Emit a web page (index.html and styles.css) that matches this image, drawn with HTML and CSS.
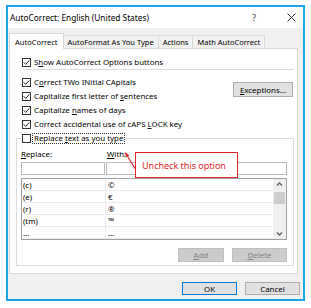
FILE: index.html
```html
<!DOCTYPE html>
<html>
<head>
<meta charset="utf-8">
<link rel="stylesheet" href="styles.css">
</head>
<body>
<div class="win">
  <div class="titlebar">
    <span class="title">AutoCorrect: English (United States)</span>
    <span class="help">?</span>
    <span class="close"><svg width="9" height="9" viewBox="0 0 9 9"><path d="M0.5 0.5 L8.5 8.5 M8.5 0.5 L0.5 8.5" stroke="#333" stroke-width="1" fill="none"/></svg></span>
  </div>
  <div class="body">
    <div class="tabs">
      <div class="tab active">AutoCorrect</div>
      <div class="tab">AutoFormat As You Type</div>
      <div class="tab">Actions</div>
      <div class="tab">Math AutoCorrect</div>
    </div>
    <div class="panel">
      <div class="row show">
        <svg class="cb" width="9" height="9" viewBox="0 0 9 9"><rect x="0.5" y="0.5" width="8" height="8" fill="#fff" stroke="#333"/><path d="M1.8 4.4 L3.7 6.4 L7.3 2.4" stroke="#222" stroke-width="1" fill="none"/></svg>
        <span>S<u>h</u>ow AutoCorrect Options buttons</span>
      </div>
      <div class="sep"></div>
      <div class="opts">
        <div class="optlist">
          <div class="row">
            <svg class="cb" width="9" height="9" viewBox="0 0 9 9"><rect x="0.5" y="0.5" width="8" height="8" fill="#fff" stroke="#333"/><path d="M1.8 4.4 L3.7 6.4 L7.3 2.4" stroke="#222" stroke-width="1" fill="none"/></svg>
            <span>C<u>o</u>rrect TWo INitial CApitals</span>
          </div>
          <div class="row">
            <svg class="cb" width="9" height="9" viewBox="0 0 9 9"><rect x="0.5" y="0.5" width="8" height="8" fill="#fff" stroke="#333"/><path d="M1.8 4.4 L3.7 6.4 L7.3 2.4" stroke="#222" stroke-width="1" fill="none"/></svg>
            <span>Capitalize first letter of <u>s</u>entences</span>
          </div>
          <div class="row">
            <svg class="cb" width="9" height="9" viewBox="0 0 9 9"><rect x="0.5" y="0.5" width="8" height="8" fill="#fff" stroke="#333"/><path d="M1.8 4.4 L3.7 6.4 L7.3 2.4" stroke="#222" stroke-width="1" fill="none"/></svg>
            <span>Capitalize <u>n</u>ames of days</span>
          </div>
          <div class="row">
            <svg class="cb" width="9" height="9" viewBox="0 0 9 9"><rect x="0.5" y="0.5" width="8" height="8" fill="#fff" stroke="#333"/><path d="M1.8 4.4 L3.7 6.4 L7.3 2.4" stroke="#222" stroke-width="1" fill="none"/></svg>
            <span>Correct accidental use of cAPS <u>L</u>OCK key</span>
          </div>
        </div>
        <div class="btn exc"><u>E</u>xceptions...</div>
      </div>
      <fieldset class="group">
        <legend class="legend">
          <svg class="cb" width="9" height="9" viewBox="0 0 9 9"><rect x="0.5" y="0.5" width="8" height="8" fill="#fff" stroke="#333"/></svg>
          <span class="focus">Replace <u>t</u>ext as you type</span>
        </legend>
        <div class="cols labels">
          <span><u>R</u>eplace:</span>
          <span class="withlbl"><u>W</u>ith:</span>
        </div>
        <div class="cols inputs">
          <div class="input"></div>
          <div class="input"></div>
        </div>
        <div class="list">
          <div class="table">
            <div class="lrow"><span class="c1">(c)</span><span class="c2">©</span></div>
            <div class="lrow"><span class="c1">(e)</span><span class="c2">€</span></div>
            <div class="lrow"><span class="c1">(r)</span><span class="c2">®</span></div>
            <div class="lrow"><span class="c1">(tm)</span><span class="c2">™</span></div>
            <div class="lrow"><span class="c1">...</span><span class="c2">…</span></div>
          </div>
          <div class="scroll">
            <svg class="arrow" width="13" height="11" viewBox="0 0 13 11"><path d="M4 6.5 L6.5 4 L9 6.5" stroke="#606060" stroke-width="1.3" fill="none"/></svg>
            <div class="thumb"></div>
            <div class="track"></div>
            <svg class="arrow" width="13" height="11" viewBox="0 0 13 11"><path d="M4 4.5 L6.5 7 L9 4.5" stroke="#606060" stroke-width="1.3" fill="none"/></svg>
          </div>
        </div>
        <div class="btnrow">
          <div class="btn disabled add"><u>A</u>dd</div>
          <div class="btn disabled del"><u>D</u>elete</div>
        </div>
      </fieldset>
    </div>
    <div class="footer">
      <div class="btn ok">OK</div>
      <div class="btn cancel">Cancel</div>
    </div>
  </div>
  <svg class="pointer" width="20" height="32" viewBox="0 0 20 32"><path d="M16 31 L7 16.5" stroke="#e0262c" stroke-width="1.2" fill="none"/><polygon points="5,13 9.3,16.2 5.9,18.3" fill="#e0262c"/></svg>
  <div class="callout">Uncheck this option</div>
</div>
</body>
</html>
```

FILE: styles.css
```css
* { box-sizing: border-box; }
html, body { margin: 0; padding: 0; background: #fff; }
body { width: 311px; height: 308px; font-family: "Noto Sans", "Open Sans", sans-serif; font-size: 7.9px; color: #000; }
u { text-decoration: underline; text-underline-offset: 1px; text-decoration-thickness: 1px; }

.win {
  position: relative;
  margin: 5px 0 0 6px;
  width: 299px;
  height: 296px;
  border: 2px solid #1aa6e6;
  display: flex;
  flex-direction: column;
  background: #f0f0f0;
}
.titlebar {
  height: 21px;
  background: #fff;
  display: flex;
  align-items: center;
  padding-left: 2px;
  flex: none;
}
.title { font-size: 8.3px; flex: 1; }
.help { width: 24px; text-align: center; font-size: 8.5px; color: #333; margin-right: 13px; }
.close { width: 24px; display: flex; justify-content: center; align-items: center; }

.body { flex: 1; display: flex; flex-direction: column; padding-top: 5px; }
.tabs { display: flex; align-items: flex-end; height: 15px; margin-left: 1px; font-size: 7.5px; }
.tab {
  height: 13px;
  padding: 0 4px;
  border: 1px solid #d9d9d9;
  border-bottom: none;
  margin-left: -1px;
  display: flex;
  align-items: center;
  background: #f0f0f0;
  white-space: nowrap;
}
.tab:first-child { margin-left: 0; }
.tab.active {
  height: 16px;
  background: #fff;
  position: relative;
  z-index: 1;
  margin-bottom: -1px;
  padding: 0 5px;
}

.panel {
  margin: 0 5px 0 1px;
  background: #fff;
  border: 1px solid #d9d9d9;
  padding-top: 6px;
  flex: none;
}
.row { height: 14px; display: flex; align-items: center; gap: 3px; padding-left: 12px; white-space: nowrap; }
.cb { flex: none; display: block; }
.sep { height: 1px; background: #dcdcdc; margin: 0 3px 5px 12px; }
.opts { display: flex; justify-content: space-between; align-items: flex-start; }
.btn {
  display: flex;
  align-items: center;
  justify-content: center;
  background: #e1e1e1;
  border: 1px solid #adadad;
  white-space: nowrap;
}
.exc { width: 60px; height: 15px; margin: 7px 4px 0 0; }

.group {
  margin: 0 3px 7px 6px;
  padding: 3px 6px 3px 4px;
  border: 1px solid #dcdcdc;
  min-width: 0;
}
.legend {
  padding: 0 1px;
  height: 14px;
  display: flex;
  align-items: center;
  gap: 2px;
}
.focus { outline: 1px dotted #333; outline-offset: 0; padding: 0 1px; line-height: 9px; }
.cols { display: grid; grid-template-columns: 84px 1fr; column-gap: 1px; }
.labels { height: 12px; align-items: center; }
.withlbl { padding-left: 1px; }
.inputs { margin-top: 2px; }
.input { height: 13px; border: 1px solid #b9b9b9; background: #fff; }
.list {
  margin-top: 3px;
  height: 62px;
  border: 1px solid #a0a0a0;
  display: flex;
  background: #fff;
}
.table { flex: 1; display: flex; flex-direction: column; }
.lrow { height: 12px; display: flex; border-bottom: 1px solid #ececec; }
.c1 { width: 84px; border-right: 1px solid #ececec; padding-left: 1px; display: flex; align-items: center; }
.c2 { flex: 1; padding-left: 2px; display: flex; align-items: center; }
.scroll { width: 13px; background: #f0f0f0; display: flex; flex-direction: column; align-items: center; }
.arrow { display: block; flex: none; }
.thumb { width: 11px; height: 12px; background: #cdcdcd; flex: none; margin-top: 2px; }
.track { flex: 1; }
.btnrow { margin-top: 8px; display: flex; justify-content: flex-end; gap: 8px; }
.disabled { background: #cccccc; border-color: #bfbfbf; color: #838383; height: 14px; }
.add { width: 46px; }
.del { width: 55px; }

.footer { display: flex; justify-content: flex-end; gap: 8px; padding: 8px 3px 0 0; }
.ok, .cancel { width: 55px; height: 13px; }
.ok { border-color: #0078d7; }

.pointer { position: absolute; left: 112px; top: 132px; }
.callout {
  position: absolute;
  left: 127px;
  top: 145px;
  width: 103px;
  height: 26px;
  border: 1px solid #e0262c;
  background: #fff;
  color: #e0262c;
  font-size: 9px;
  display: flex;
  align-items: center;
  padding-left: 6px;
  white-space: nowrap;
}
```
